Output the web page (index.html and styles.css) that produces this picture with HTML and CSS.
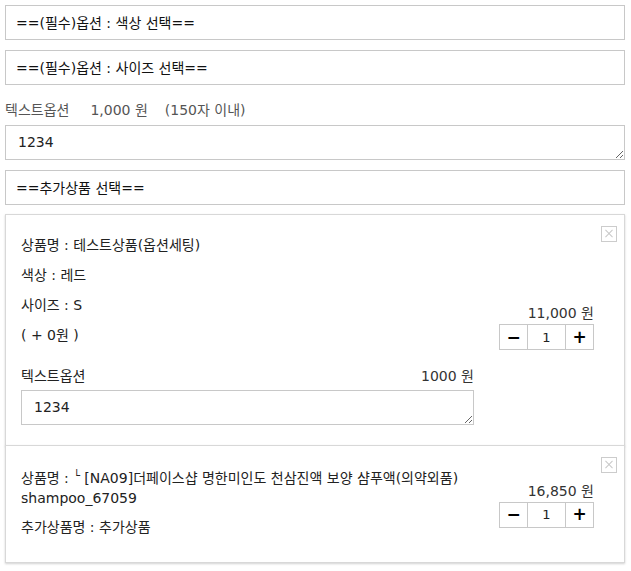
FILE: index.html
```html
<!DOCTYPE html>
<html lang="ko">

<head>
    <meta charset="UTF-8">
    <meta name="viewport" content="width=device-width, initial-scale=1.0">
    <title>옵션 선택</title>
    <link rel="stylesheet" href="styles.css">
</head>

<body>
    <div class="option-wrap">
        <select class="opt-select">
            <option>==(필수)옵션 : 색상 선택==</option>
        </select>
        <select class="opt-select">
            <option>==(필수)옵션 : 사이즈 선택==</option>
        </select>

        <div class="text-opt">
            <p class="text-opt-label">
                <span>텍스트옵션</span>
                <span class="won">1,000 원</span>
                <span>(150자 이내)</span>
            </p>
            <textarea class="opt-textarea">1234</textarea>
        </div>

        <select class="opt-select last">
            <option>==추가상품 선택==</option>
        </select>

        <!-- 선택된 상품 -->
        <div class="sel-item">
            <div class="sel-info">
                <p>상품명 : 테스트상품(옵션세팅)</p>
                <p>색상 : 레드</p>
                <p>사이즈 : S</p>
                <p>( + 0원 )</p>
                <div class="sel-text-opt">
                    <div class="sel-text-head">
                        <span>텍스트옵션</span>
                        <span>1000 원</span>
                    </div>
                    <textarea class="opt-textarea">1234</textarea>
                </div>
            </div>
            <div class="sel-price up">
                <p class="price">11,000 원</p>
                <div class="qty">
                    <button class="qty-btn">&minus;</button>
                    <input class="qty-input" type="text" value="1">
                    <button class="qty-btn">+</button>
                </div>
            </div>
            <button class="btn-del"></button>
        </div>

        <div class="sel-item add">
            <div class="sel-info">
                <p class="lines">상품명 : <sup>└</sup> [NA09]더페이스샵 명한미인도 천삼진액 보양 샴푸액(의약외품)<br>shampoo_67059</p>
                <p>추가상품명 : 추가상품</p>
            </div>
            <div class="sel-price down">
                <p class="price">16,850 원</p>
                <div class="qty">
                    <button class="qty-btn">&minus;</button>
                    <input class="qty-input" type="text" value="1">
                    <button class="qty-btn">+</button>
                </div>
            </div>
            <button class="btn-del"></button>
        </div>
    </div>
</body>

</html>
```

FILE: styles.css
```css
* {
    margin: 0;
    padding: 0;
    box-sizing: border-box;
}

body {
    padding: 5px 6px 5px 5px;
    font-family: "DejaVu Sans", "Noto Sans CJK KR", sans-serif;
    font-size: 14px;
    color: #222;
    background: #fff;
}

.option-wrap {
    display: flex;
    flex-direction: column;
    width: 620px;
}

.opt-select {
    appearance: none;
    -webkit-appearance: none;
    height: 35px;
    margin-bottom: 10px;
    padding: 0 10px;
    border: 1px solid #c8c8c8;
    border-radius: 0;
    background: #fff;
    font: inherit;
    color: #111;
    outline: none;
}

.opt-select.last {
    margin-bottom: 9px;
}

.text-opt {
    margin-bottom: 10px;
}

.text-opt-label {
    display: flex;
    gap: 21px;
    padding-top: 5px;
    height: 30px;
    line-height: 20px;
    color: #555;
}

.text-opt-label .won {
    margin-right: -4px;
}

.opt-textarea {
    display: block;
    width: 100%;
    height: 35px;
    padding: 7px 12px;
    border: 1px solid #c8c8c8;
    border-radius: 0;
    font: inherit;
    line-height: 19px;
    color: #222;
    resize: vertical;
    outline: none;
}

.sel-item {
    position: relative;
    display: flex;
    align-items: center;
    padding: 20px 30px 20px 15px;
    border: 1px solid #d8d8d8;
    box-shadow: 0 1px 2px rgba(0, 0, 0, 0.18);
    background: #fff;
}

.sel-item.add {
    margin-top: -1px;
    padding-bottom: 25px;
}

.sel-info {
    width: 453px;
}

.sel-info p {
    line-height: 20px;
    margin-bottom: 10px;
}

.sel-info p:last-child {
    margin-bottom: 0;
}

.sel-info .lines {
    margin-bottom: 9px;
}

.sel-info sup {
    font-size: 11px;
    font-weight: bold;
    vertical-align: 4px;
}

.sel-text-opt {
    margin-top: 21px;
}

.sel-text-head {
    display: flex;
    justify-content: space-between;
    line-height: 20px;
    margin-bottom: 4px;
}

.sel-text-head span:last-child {
    color: #333;
}

.sel-price {
    display: flex;
    flex-direction: column;
    align-items: flex-end;
    margin-left: auto;
}

.sel-price.up {
    margin-bottom: 7px;
}

.sel-price.down {
    margin-top: 5px;
}

.price {
    line-height: 20px;
    margin-bottom: 1px;
    color: #333;
}

.qty {
    display: flex;
    height: 26px;
    border: 1px solid #c8c8c8;
}

.qty-btn {
    width: 27px;
    border: 0;
    background: #fff;
    font: inherit;
    font-size: 17px;
    font-weight: bold;
    color: #000;
    line-height: 1;
}

.qty-input {
    width: 39px;
    border: 0;
    border-left: 1px solid #c8c8c8;
    border-right: 1px solid #c8c8c8;
    text-align: center;
    font: inherit;
    font-size: 13px;
    color: #222;
    outline: none;
}

.btn-del {
    position: absolute;
    top: 11px;
    right: 7px;
    width: 16px;
    height: 16px;
    border: 1px solid #ccc;
    background: #fff;
}

.btn-del::before,
.btn-del::after {
    content: "";
    position: absolute;
    top: 6px;
    left: 2px;
    width: 10px;
    height: 1px;
    background: #c8c8c8;
    transform: rotate(45deg);
}

.btn-del::after {
    transform: rotate(-45deg);
}
```
